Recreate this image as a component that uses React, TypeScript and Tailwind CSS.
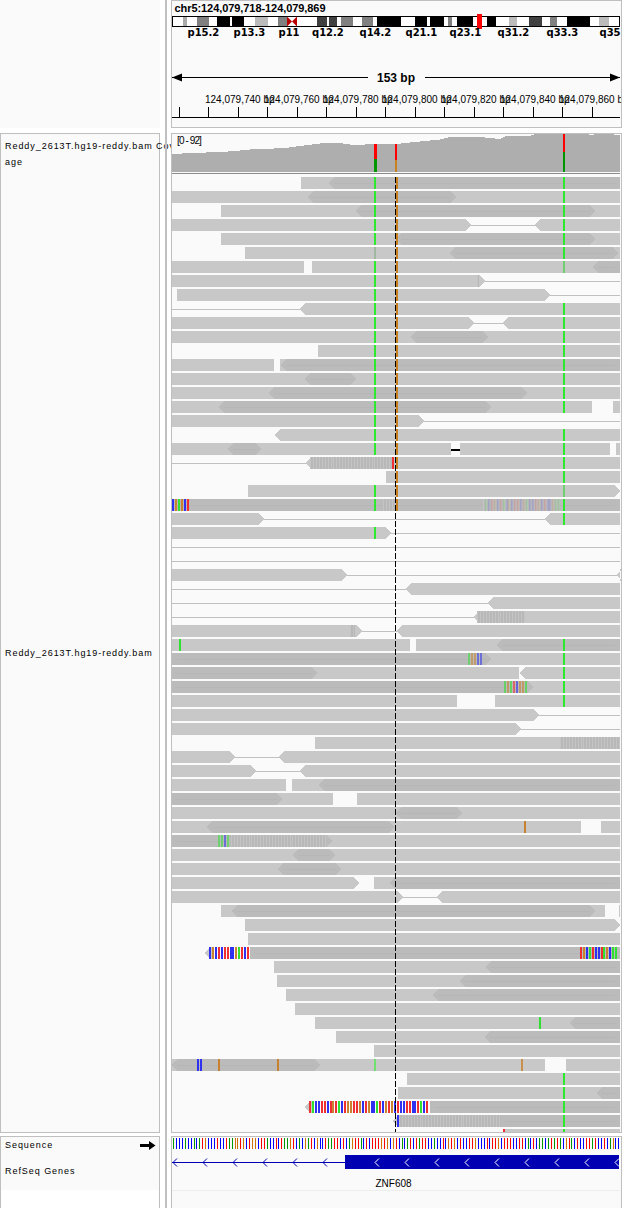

import React from "react";

type End = "" | "<" | ">" | "<>";
type Seg = [number, number, End?];
type Bases = [number, string, number?];
type Row = {
  n?: [number, number][];
  l?: Seg[];
  d?: Seg[];
  s?: [number, number][];
  b?: Bases[];
};

const W: Seg = [172, 620];

const rows: Row[] = [
  { l: [[301, 620]], d: [[329, 620, "<"]] },
  { l: [W], d: [[308, 456, "<>"]] },
  { l: [[221, 620]], d: [[356, 595, "<>"]] },
  { n: [[468, 538]], l: [[172, 471, ">"], [535, 620, "<"]] },
  { l: [[221, 620]], d: [[396, 595, "<>"]] },
  { l: [[245, 620]], d: [[450, 618, "<>"]] },
  { l: [[172, 304], [312, 620]], d: [[593, 620, "<"]] },
  { n: [[480, 620]], l: [[172, 485, ">"]], s: [[477, 479]] },
  { n: [[547, 620]], l: [[177, 550, ">"]] },
  { n: [[172, 302]], l: [[300, 620, "<"]] },
  { n: [[470, 506]], l: [[172, 474, ">"], [503, 620, "<"]] },
  { l: [W], d: [[411, 488, "<>"]] },
  { l: [[318, 620]] },
  { l: [[172, 274], [280, 620]], d: [[281, 620, "<"]] },
  { l: [W], d: [[305, 356, "<>"]] },
  { l: [W], d: [[269, 527, "<>"]] },
  { l: [[172, 592], [613, 620]], d: [[219, 491, "<>"]] },
  { n: [[420, 620]], l: [[172, 424, ">"]] },
  { l: [[275, 620, "<"]] },
  { l: [[172, 451], [460, 610], [616, 620]], d: [[228, 261, "<>"]] },
  { n: [[172, 306]], l: [[394, 620], [306, 312, "<"]], s: [[310, 392]], b: [[392, "r"]] },
  { l: [[386, 620]] },
  { l: [[248, 620, ">"]] },
  { d: [[172, 620]], s: [[383, 396], [483, 560]], b: [[172, "bogobr"], [485, "gbrobrgbobrrbogbbrobrbbogg", 0.15]] },
  { n: [[260, 549]], l: [[172, 264, ">"], [545, 620, "<"]] },
  { n: [[388, 620]], l: [[172, 391, ">"]] },
  { n: [[172, 620]] },
  { n: [[172, 620]] },
  { n: [[343, 620]], l: [[172, 347, ">"], [617, 620, "<"]] },
  { n: [[172, 407]], l: [[406, 620, "<"]] },
  { n: [[172, 490]], l: [[488, 620, "<"]] },
  { n: [[172, 476]], l: [[474, 620, "<"]], s: [[477, 524]] },
  { n: [[358, 399]], l: [[172, 362, ">"], [397, 620, "<"]], s: [[350, 355]] },
  { l: [[172, 410], [416, 620]], d: [[497, 620, "<"]], b: [[179, "g"]] },
  { l: [W], d: [[172, 491, ">"]], b: [[468, "goobb", 0.55]] },
  { l: [[172, 519], [520, 620, "<"]], d: [[172, 317, ">"]] },
  { l: [W], d: [[172, 533, ">"]], b: [[504, "gogrboog", 0.6]] },
  { l: [[172, 457], [495, 620]] },
  { n: [[535, 620]], l: [[172, 539, ">"]] },
  { n: [[518, 620]], l: [[172, 521, ">"]] },
  { l: [[315, 620]], s: [[560, 620]] },
  { n: [[231, 283]], l: [[172, 235, ">"], [279, 620, "<"]] },
  { n: [[252, 304]], l: [[172, 256, ">"], [300, 620, "<"]] },
  { l: [[172, 286], [292, 620]], d: [[319, 620, "<"]] },
  { l: [[172, 333], [357, 620]], d: [[172, 282, ">"]] },
  { l: [W], d: [[396, 462, "<>"]] },
  { l: [[172, 581], [601, 620]], d: [[207, 394, "<>"]], b: [[524, "o"]] },
  { l: [W], d: [[172, 332, ">"]], s: [[228, 325]], b: [[218, "ggbg", 0.55]] },
  { l: [W], d: [[293, 335, "<>"]] },
  { l: [W], d: [[278, 341, "<>"]] },
  { l: [[172, 359, ">"], [374, 620]], d: [[390, 620, "<"]] },
  { n: [[399, 441]], l: [[172, 403, ">"], [437, 620, "<"]] },
  { l: [[221, 605], [619, 620]], d: [[232, 595, "<>"]] },
  { l: [[245, 620, ">"]] },
  { l: [[248, 620]] },
  { l: [[205, 212, "<"]], d: [[250, 620]], b: [[209, "bobrbrrbbogrbr"], [580, "robgrbbrgobgg"]] },
  { l: [[274, 620]], d: [[486, 620, "<"]] },
  { l: [[277, 620]], d: [[460, 620, "<"]] },
  { l: [[286, 620]], d: [[433, 620, "<"]] },
  { l: [[295, 620]] },
  { l: [[315, 620]], d: [[570, 620, "<"]], b: [[539, "g"]] },
  { l: [[336, 620]], d: [[485, 620, "<"]] },
  { l: [[374, 620]] },
  { l: [[172, 545], [566, 620]], d: [[172, 320, "<>"]], b: [[197, "bb"], [218, "o"], [277, "o"], [521, "o", 0.8]] },
  { l: [[407, 620]] },
  { l: [[398, 620]], d: [[597, 620, "<"]] },
  { l: [[305, 312, "<"]], d: [[430, 620]], b: [[309, "rgbbrrbrorgbroorrobrobbgrborobrbbrrbbrgbr"]] },
  { l: [[393, 398, "<"], [399, 620]], d: [[501, 620]], s: [[399, 501]], b: [[397, "b"]] },
  { l: [[505, 620]], b: [[503, "r"]] },
];

const green375 = new Set([0, 1, 2, 3, 4, 6, 7, 8, 9, 10, 11, 12, 13, 14, 15, 16, 17, 18, 19, 22, 23, 25]);
const green564 = new Set([0, 1, 2, 3, 4, 5, 9, 10, 11, 12, 13, 14, 15, 16, 18, 19, 20, 21, 23, 24, 33, 34, 35, 36, 37, 64, 65, 66, 67, 68]);

const colors: Record<string, string> = { r: "#f03030", g: "#30e030", b: "#3030f0", o: "#c8812e" };
const seqColors: Record<string, string> = { r: "#ff0000", g: "#009600", b: "#0000ff", o: "#d17105" };

const sequence =
  "gbbbgbbgbgrobbbrbbrggoorobroobrrgbbrbrggorbgbogrbobbrggrrbrbgorrgbrbrrroroborbgbgrbrgrrbbgbbrborobrbbrrobbbrbrrobrrrbbrrbgbrbggbgrgrgborgbrbbrrgrbbrbgobbr";

function poly(x1: number, x2: number, end: End | undefined, y: number) {
  const e = end ?? "";
  const left = e.includes("<")
    ? `${x1 + 5},${y + 12} ${x1},${y + 6} ${x1 + 5},${y}`
    : `${x1},${y + 12} ${x1},${y}`;
  const right = e.includes(">")
    ? `${x2 - 5},${y} ${x2},${y + 6} ${x2 - 5},${y + 12}`
    : `${x2},${y} ${x2},${y + 12}`;
  return `${left} ${right}`;
}

function ReadRow({ row, index }: { row: Row; index: number }) {
  const y = 177 + index * 14;
  const stripes: number[] = [];
  (row.s ?? []).forEach(([a, b]) => {
    for (let x = a; x < b; x += 2.93) stripes.push(Math.round(x));
  });
  return (
    <g>
      {(row.n ?? []).map(([a, b], i) => (
        <rect key={i} x={a} y={y + 6} width={b - a} height={1} fill="#c0c0c0" />
      ))}
      {(row.l ?? []).map(([a, b, e], i) => (
        <polygon key={i} points={poly(a, b, e, y)} fill="#c8c8c8" />
      ))}
      {(row.d ?? []).map(([a, b, e], i) => (
        <g key={i}>
          <polygon points={poly(a, b, e, y)} fill="#bbbbbb" />
          <rect x={a + 5} y={y + 6} width={Math.max(0, b - a - 10)} height={1} fill="#b6b6b6" />
        </g>
      ))}
      {(row.s ?? []).map(([a, b], i) => (
        <rect key={i} x={a} y={y} width={b - a} height={12} fill="#b8b8b8" />
      ))}
      {stripes.map((x, i) => (
        <rect key={i} x={x} y={y} width={1} height={12} fill="#c4c4c4" />
      ))}
      {(row.b ?? []).map(([x0, str, op], i) => (
        <g key={i} opacity={op ?? 1}>
          {str.split("").map((c, j) => (
            <rect key={j} x={Math.round(x0 + j * 2.93)} y={y} width={2} height={12} fill={colors[c]} />
          ))}
        </g>
      ))}
      {index < 24 && <rect x={396} y={y} width={2} height={12} fill="#c8811e" />}
      {green375.has(index) && <rect x={374} y={y} width={2} height={12} fill="#2eea2e" />}
      {index === 5 && <rect x={374} y={y} width={2} height={12} fill="#a0b8a0" />}
      {index === 63 && <rect x={374} y={y} width={2} height={12} fill="#70e070" />}
      {green564.has(index) && <rect x={563} y={y} width={2} height={12} fill="#2eea2e" />}
      {(index === 6 || index === 22) && <rect x={563} y={y} width={2} height={12} fill="#70d070" />}
    </g>
  );
}

const bands: [number, number, string][] = [
  [172, 183, "#ffffff"], [183, 187, "#aaaaaa"], [187, 197, "#ffffff"], [197, 209, "#808080"],
  [209, 217, "#ffffff"], [217, 230, "#000000"], [230, 232, "#ffffff"], [232, 244, "#000000"],
  [244, 255, "#ffffff"], [255, 268, "#bbbbbb"], [268, 278, "#ffffff"], [278, 287, "#808080"],
  [297, 317, "#ffffff"], [317, 327, "#404040"], [327, 329, "#ffffff"], [329, 337, "#404040"],
  [337, 341, "#ffffff"], [341, 353, "#808080"], [353, 362, "#ffffff"], [362, 373, "#808080"],
  [373, 377, "#ffffff"], [377, 401, "#000000"], [401, 415, "#ffffff"], [415, 427, "#000000"],
  [427, 430, "#ffffff"], [430, 444, "#000000"], [444, 448, "#ffffff"], [448, 452, "#808080"],
  [452, 457, "#ffffff"], [457, 473, "#000000"], [473, 487, "#ffffff"], [487, 496, "#000000"],
  [496, 509, "#ffffff"], [509, 517, "#bbbbbb"], [517, 529, "#ffffff"], [529, 542, "#404040"],
  [542, 550, "#ffffff"], [550, 557, "#808080"], [557, 567, "#ffffff"], [567, 590, "#000000"],
  [590, 599, "#ffffff"], [599, 609, "#bbbbbb"], [609, 620, "#ffffff"],
];

const bandLabels: [number, string][] = [
  [187.5, "p15.2"], [233.5, "p13.3"], [278.5, "p11"], [312, "q12.2"], [359.5, "q14.2"],
  [405.5, "q21.1"], [449.5, "q23.1"], [497.5, "q31.2"], [546.5, "q33.3"], [599.5, "q35"],
];

const ticks = [179, 208, 238, 267, 297, 326, 356, 385, 415, 444, 474, 503, 533, 562, 592];
const rulerLabels: [number, string][] = [
  [205, "124,079,740 bp"], [264, "124,079,760 bp"], [323, "124,079,780 bp"], [382, "124,079,800 bp"],
  [441, "124,079,820 bp"], [500, "124,079,840 bp"], [559, "124,079,860 bp"],
];

const coverage =
  "172,172 172,154 191,153 220,152 235,151 250,149.5 262,149 285,148 300,146 320,143.5 340,143 345,144 355,145 375,144 396,144 405,143 410,142.5 430,140.5 440,139.5 450,137 480,137 490,138 500,139 505,136.5 530,136 535,134 588,134 590,135 598,134 613,134 614,135 620,135 620,172";

const chevrons = [375, 405, 435, 465, 495, 525, 555, 585, 615];
const introns = [173, 203, 233, 263, 293, 323];

export default function App() {
  const labelCls = "text-[9px] leading-[11px] tracking-[0.95px] whitespace-nowrap text-black";
  return (
    <div className="flex h-[1208px] w-[640px] overflow-hidden bg-white font-['Liberation_Sans',sans-serif]">
      {/* Track names */}
      <div className="flex w-[160px] shrink-0 flex-col">
        <div className="h-[128px] bg-[#fafafa]" />
        <div className="mt-[5px] flex h-[1000px] flex-col border border-[#bfbfbf] bg-[#fafafa] pl-[4px]">
          <div className="flex h-[41px] flex-col gap-[5px] pt-[7px]">
            <span className={labelCls}>Reddy_2613T.hg19-reddy.bam Cov</span>
            <span className={labelCls}>age</span>
          </div>
          <div className="flex flex-1 items-center">
            <span className={labelCls}>Reddy_2613T.hg19-reddy.bam</span>
          </div>
        </div>
        <div className="mt-[3px] flex-1 border-x border-t border-[#bfbfbf]">
          <div className="flex h-[53px] flex-col gap-[15px] bg-[#fafafa] pl-[4px] pt-[3px]">
            <div className="flex items-center justify-between pr-[3px]">
              <span className={labelCls}>Sequence</span>
              <svg width="16" height="9" viewBox="0 0 16 9">
                <path d="M0 3 H9 V0 L15.5 4.5 L9 9 V6 H0 Z" fill="#000" />
              </svg>
            </div>
            <span className={labelCls}>RefSeq Genes</span>
          </div>
        </div>
      </div>

      {/* Divider */}
      <div className="relative ml-[5px] w-[2px] shrink-0 bg-[#bfbfbf]" />

      {/* Data panels */}
      <div className="relative ml-[4px] flex w-[451px] shrink-0 flex-col">
        <div className="h-[128px] border border-[#bfbfbf] bg-[#fafafa]">
          <div className="h-[12px] pl-[2.5px] text-[11px] font-bold leading-[15px] tracking-[-0.07px] text-black whitespace-nowrap">
            chr5:124,079,718-124,079,869
          </div>
          <svg className="relative block" width="449" height="114" viewBox="172 13 449 114">
            <g shapeRendering="crispEdges">
              {bands.map(([a, b, c]) => (
                <rect key={a} x={a} y={16} width={b - a} height={11} fill={c} />
              ))}
              <rect x={172.5} y={16.5} width={447} height={10} fill="none" stroke="#000" />
            </g>
            <polygon points="287,16.5 292,21.5 287,26.5" fill="#b80000" />
            <polygon points="297,16.5 292,21.5 297,26.5" fill="#b80000" />
            <rect x={477} y={14} width={5} height={15} fill="#ff0000" />
            {bandLabels.map(([x, t]) => (
              <text key={t} x={x} y={36} className="font-['DejaVu_Sans',sans-serif] text-[10px] font-bold" fill="#000">
                {t}
              </text>
            ))}
            <rect x={172} y={77} width={196} height={1} fill="#000" />
            <rect x={425} y={77} width={195} height={1} fill="#000" />
            <polygon points="172,77.5 182,73.5 182,81.5" fill="#000" />
            <polygon points="620,77.5 610,73.5 610,81.5" fill="#000" />
            <text x={377} y={82} className="text-[12px] font-bold" fill="#000">
              153 bp
            </text>
            {rulerLabels.map(([x, t]) => (
              <text key={x} x={x} y={103} className="text-[10px]" fill="#000">
                {t}
              </text>
            ))}
            <g shapeRendering="crispEdges">
              {ticks.map((x) => (
                <rect key={x} x={x} y={107} width={1} height={10} fill="#000" />
              ))}
              <rect x={172} y={117} width={448} height={1} fill="#000" />
            </g>
          </svg>
        </div>

        <div className="mt-[5px] h-[1000px] border border-[#bfbfbf] bg-[#fafafa]">
          <svg className="block" width="449" height="998" viewBox="172 134 449 998">
            <polygon points={coverage} fill="#aeaeae" shapeRendering="crispEdges" />
            <g shapeRendering="crispEdges">
              <rect x={374} y={144} width={3} height={15} fill="#ff0000" />
              <rect x={374} y={159} width={3} height={13} fill="#009600" />
              <rect x={395} y={144} width={2} height={16} fill="#ff0000" />
              <rect x={395} y={160} width={2} height={12} fill="#c8811e" />
              <rect x={563} y={134} width={2} height={18} fill="#ff0000" />
              <rect x={563} y={152} width={2} height={20} fill="#009600" />
              <rect x={172} y={173} width={448} height={1} fill="#8c8c8c" />
            </g>
            <text x={177} y={144} className="text-[10px]" letterSpacing="-0.9" fill="#000">
              [0 - 92]
            </text>
            <g shapeRendering="crispEdges">
              {rows.map((row, i) => (
                <ReadRow key={i} row={row} index={i} />
              ))}
              <rect x={451} y={449} width={9} height={2} fill="#000" />
              <line x1={395.5} y1={177} x2={395.5} y2={1132} stroke="#000" strokeWidth={1} strokeDasharray="6 2" />
            </g>
          </svg>
        </div>

        <div className="mt-[3px] flex-1 border-x border-t border-[#bfbfbf] bg-[#fafafa]">
          <svg className="block" width="449" height="71" viewBox="172 1137 449 71">
            <g shapeRendering="crispEdges">
              {sequence
                .slice(0, 153)
                .split("")
                .map((c, i) => (
                  <rect key={i} x={Math.round(173 + i * 2.93)} y={1138} width={1} height={10.5} fill={seqColors[c]} />
                ))}
              <rect x={172} y={1162} width={173} height={1} fill="#0000b2" />
              <rect x={345} y={1155} width={274} height={14} fill="#0000b2" />
              <rect x={172} y={1190} width={448} height={1} fill="#eeeeee" />
            </g>
            {introns.map((x) => (
              <polyline key={x} points={`${x + 4},1158.5 ${x},1162.5 ${x + 4},1166.5`} fill="none" stroke="#0000b2" />
            ))}
            {chevrons.map((x) => (
              <polyline key={x} points={`${x + 4},1158.5 ${x},1162.5 ${x + 4},1166.5`} fill="none" stroke="#ffffff" />
            ))}
            <text x={375.5} y={1187} className="text-[10px]" fill="#000">
              ZNF608
            </text>
          </svg>
        </div>
      </div>
    </div>
  );
}
